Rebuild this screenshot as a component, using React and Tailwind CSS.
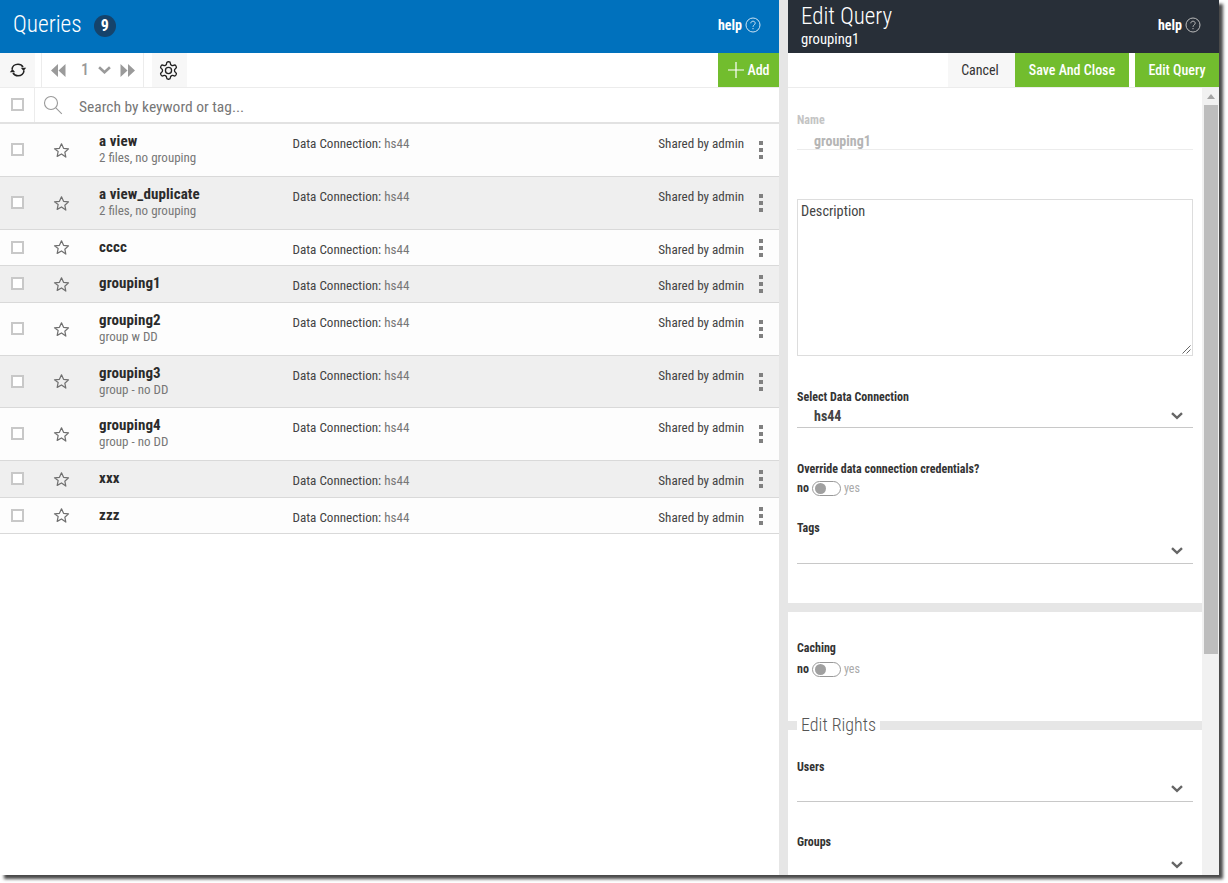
const rows = [
  { name: "a view", sub: "2 files, no grouping", h: "h-[53px]" },
  { name: "a view_duplicate", sub: "2 files, no grouping", h: "h-[53px]", alt: true },
  { name: "cccc", h: "h-[36px]" },
  { name: "grouping1", h: "h-[37px]", alt: true },
  { name: "grouping2", sub: "group w DD", h: "h-[53px]" },
  { name: "grouping3", sub: "group - no DD", h: "h-[52px]", alt: true },
  { name: "grouping4", sub: "group - no DD", h: "h-[53px]" },
  { name: "xxx", h: "h-[37px]", alt: true },
  { name: "zzz", h: "h-[36px]" },
];

function Help({ color }) {
  return (
    <div className="flex items-center gap-[3px] text-white">
      <span className="text-[14px] font-bold leading-none">help</span>
      <svg width="16" height="16" viewBox="0 0 16 16" fill="none" stroke={color} strokeWidth="1">
        <circle cx="8" cy="8" r="7" />
        <path d="M5.8 6.3c0-1.3 1-2.1 2.2-2.1s2.2.8 2.2 2c0 1.8-2.2 1.800-2.200 3.600M8 11v1.200" />
      </svg>
    </div>
  );
}

function Checkbox() {
  return <div className="h-[13px] w-[13px] border-2 border-[#c8c8c8] bg-white" />;
}

function Star() {
  return (
    <svg width="17" height="17" viewBox="0 0 24 24" fill="none" stroke="#6f6f6f" strokeWidth="1.7" strokeLinejoin="round">
      <path d="M12 2.500l2.900 6.400 7 .8-5.200 4.700 1.400 6.900L12 16.900l-6.100 3.400 1.400-6.900L2.100 9.700l7-.8z" />
    </svg>
  );
}

function Kebab() {
  return (
    <div className="flex flex-col gap-[3px]">
      <div className="h-[4px] w-[4px] bg-[#808080]" />
      <div className="h-[4px] w-[4px] bg-[#808080]" />
      <div className="h-[4px] w-[4px] bg-[#808080]" />
    </div>
  );
}

function Chevron({ color = "#666", w = 12 }) {
  return (
    <svg width={w} height={w * 0.67} viewBox="0 0 12 8" fill="none" stroke={color} strokeWidth="2.4">
      <path d="M1 1.200l5 4.600 5-4.600" />
    </svg>
  );
}

function Row({ name, sub, h, alt }) {
  return (
    <div className={`${h} flex border-b border-[#d9d9d9] ${alt ? "bg-[#efefef]" : "bg-[#fdfdfd]"}`}>
      <div className="flex w-[99px] shrink-0 items-center">
        <div className="ml-[11px] pb-[1px]"><Checkbox /></div>
        <div className="ml-[29px]"><Star /></div>
      </div>
      <div className="w-[193.500px] shrink-0 pt-[9px]">
        <div className="text-[15px] font-bold leading-[16px] tracking-[0.1px] text-[#2b2b2b]">{name}</div>
        {sub && <div className="text-[13px] leading-[17px] text-[#777]">{sub}</div>}
      </div>
      <div className="flex-1 pt-[13px] text-[13.100px] leading-[14px] text-[#444]">
        Data Connection: <span className="text-[#777]">hs44</span>
      </div>
      <div className="pt-[13px] text-[13.100px] leading-[14px] text-[#444]">Shared by admin</div>
      <div className="flex w-[35px] shrink-0 items-center justify-center pr-[1px]"><Kebab /></div>
    </div>
  );
}

function Label({ children }) {
  return <div className="text-[12px] font-bold leading-[14px] text-[#333]">{children}</div>;
}

function SelectLine({ value, h = "h-[23px]", pad = "" }) {
  return (
    <div className={`${h} ${pad} flex items-center justify-between border-b border-[#c8c8c8] pr-[10px]`}>
      <span className="pl-[17px] text-[14px] font-bold text-[#444]">{value}</span>
      <Chevron />
    </div>
  );
}

function Toggle() {
  return (
    <div className="flex items-center text-[12px] leading-[16px]">
      <span className="font-bold text-[#333]">no</span>
      <div className="ml-[3px] flex h-[15px] w-[29px] items-center rounded-full border border-[#999] bg-white pl-[2px]">
        <div className="h-[11px] w-[11px] rounded-full bg-[#a0a0a0]" />
      </div>
      <span className="ml-[3px] text-[#aaa]">yes</span>
    </div>
  );
}

export default function App() {
  return (
    <div className="h-[883px] w-[1228px] overflow-hidden bg-white font-['Roboto',sans-serif] [font-stretch:75%]">
      <div className="flex h-[875px] w-[1219px] shadow-[4px_4px_3px_#4a4a4a]">
        <div className="flex w-[779px] shrink-0 flex-col bg-white">
          <div className="flex h-[53px] shrink-0 items-center justify-between bg-[#0071bd] pb-[3px] pl-[13px] pr-[18px]">
            <div className="flex items-center">
              <span className="text-[23.300px] font-light leading-none text-white">Queries</span>
              <div className="ml-[12px] mt-[2px] flex h-[22px] w-[22px] items-center justify-center rounded-full bg-[#15436b] text-[16px] font-bold text-white">9</div>
            </div>
            <Help color="#cfe3f3" />
          </div>
          <div className="flex h-[35px] shrink-0 items-stretch border-b border-[#ececec]">
            <div className="flex w-[35px] items-center justify-center bg-[#f7f7f7]">
              <svg width="18" height="16" viewBox="0 0 18 16" fill="none" stroke="#222" strokeWidth="1.600">
                <path d="M3 7.500C3.200 4.300 5.800 2.300 9 2.300c2.300 0 4 1 5 2.700M15 8.500c-.2 3.200-2.800 5.200-6 5.200-2.300 0-4-1-5-2.700" />
                <path d="M11.800 5.800h5.400l-2.700 3.200zM.8 10.200h5.400L3.500 7z" fill="#222" stroke="none" />
              </svg>
            </div>
            <div className="ml-[6px] flex w-[103px] items-center border-x border-[#ececec] pl-[9px]">
              <svg width="15" height="13" viewBox="0 0 15 13" fill="#9a9a9a"><path d="M7 0v13L0 6.500zM14.500 0v13L7.500 6.500z" /></svg>
              <span className="ml-[15px] w-[8px] text-[16px] font-medium text-[#999]">1</span>
              <div className="ml-[9px]"><Chevron color="#9a9a9a" w={13} /></div>
              <svg className="ml-[9px]" width="15" height="13" viewBox="0 0 15 13" fill="#9a9a9a"><path d="M0.500 0v13l7-6.500zM8 0v13l7-6.500z" /></svg>
            </div>
            <div className="ml-[8px] flex w-[35px] items-center justify-center bg-[#f7f7f7] pr-[2px]">
              <svg width="21" height="21" viewBox="0 0 24 24" fill="none" stroke="#222" strokeWidth="1.500" strokeLinejoin="round">
                <path d="M12.220 2h-.440a2 2 0 0 0-2 2v.180a2 2 0 0 1-1 1.730l-.430.250a2 2 0 0 1-2 0l-.150-.080a2 2 0 0 0-2.730.730l-.220.380a2 2 0 0 0 .730 2.730l.150.100a2 2 0 0 1 1 1.720v.510a2 2 0 0 1-1 1.740l-.150.090a2 2 0 0 0-.730 2.730l.220.380a2 2 0 0 0 2.730.730l.150-.080a2 2 0 0 1 2 0l.430.250a2 2 0 0 1 1 1.730V20a2 2 0 0 0 2 2h.440a2 2 0 0 0 2-2v-.180a2 2 0 0 1 1-1.730l.430-.250a2 2 0 0 1 2 0l.150.080a2 2 0 0 0 2.730-.730l.220-.390a2 2 0 0 0-.730-2.730l-.150-.080a2 2 0 0 1-1-1.740v-.500a2 2 0 0 1 1-1.740l.150-.090a2 2 0 0 0 .730-2.730l-.220-.380a2 2 0 0 0-2.730-.730l-.150.080a2 2 0 0 1-2 0l-.430-.250a2 2 0 0 1-1-1.730V4a2 2 0 0 0-2-2z" />
                <circle cx="12" cy="12" r="3.500" />
              </svg>
            </div>
            <div className="flex-1" />
            <div className="flex w-[61px] items-center justify-center gap-[2px] bg-[#72bd2e] text-[14px] font-medium text-white">
              <svg width="18" height="18" viewBox="0 0 18 18" stroke="white" strokeWidth="1.200"><path d="M9 1v16M1 9h16" /></svg>
              Add
            </div>
          </div>
          <div className="flex h-[36px] shrink-0 items-center border-b-2 border-[#e2e2e2]">
            <div className="flex h-full w-[35px] items-center justify-center border-r border-[#ececec] pb-[2px]"><Checkbox /></div>
            <svg className="ml-[8px]" width="20" height="20" viewBox="0 0 20 20" fill="none" stroke="#999" strokeWidth="1.100">
              <circle cx="8" cy="8" r="6.500" /><path d="M12.800 12.800l6 6" />
            </svg>
            <span className="ml-[16px] mt-[5px] text-[15.500px] text-[#777]">Search by keyword or tag...</span>
          </div>
          {rows.map((r) => <Row key={r.name} {...r} />)}
        </div>

        <div className="w-[9px] shrink-0 bg-[#e6e6e6]" />

        <div className="flex min-w-0 flex-1 flex-col">
          <div className="flex h-[53px] shrink-0 items-center justify-between bg-[#282f38] pb-[3px] pl-[13px] pr-[18px] text-white">
            <div>
              <div className="text-[23px] font-light leading-[28px]">Edit Query</div>
              <div className="text-[14.700px] leading-[17px]">grouping1</div>
            </div>
            <Help color="#bbb" />
          </div>
          <div className="flex h-[35px] shrink-0 justify-end border-b border-[#ececec] text-[14px]">
            <div className="flex w-[67px] items-center justify-center bg-[#f7f7f7] pr-[3px] text-[#333]">Cancel</div>
            <div className="flex w-[114px] items-center justify-center bg-[#72bd2e] font-medium text-white">Save And Close</div>
            <div className="ml-[6px] flex w-[84px] items-center justify-center bg-[#72bd2e] font-medium text-white">Edit Query</div>
          </div>
          <div className="flex min-h-0 flex-1">
            <div className="min-w-0 flex-1 overflow-hidden bg-white">
              <div className="px-[9px]">
                <div className="pt-[25px] text-[12px] font-bold leading-[14px] text-[#c4c4c4]">Name</div>
                <div className="mt-[4px] h-[19px] border-b border-[#ececec] pl-[17px] text-[14px] font-bold leading-[21px] text-[#b5b5b5]">grouping1</div>
                <div className="mt-[49px] flex h-[157px] flex-col border border-[#ddd] px-[3px] pb-[1px] pt-[2px] text-[14.300px] leading-[18px] text-[#444]">
                  <span>Description</span>
                  <svg className="-mr-[2px] mt-auto self-end" width="9" height="9" viewBox="0 0 9 9" stroke="#666" strokeWidth="1">
                    <path d="M8.500 .5l-8 8M8.500 4.500l-4 4" />
                  </svg>
                </div>
                <div className="mt-[34px]"><Label>Select Data Connection</Label></div>
                <div className="mt-[1px]"><SelectLine value="hs44" /></div>
                <div className="mt-[34px]"><Label>Override data connection credentials?</Label></div>
                <div className="mt-[4px]"><Toggle /></div>
                <div className="mt-[25px]"><Label>Tags</Label></div>
                <SelectLine h="h-[29px]" pad="pt-[4px]" />
              </div>
              <div className="mt-[39px] h-[9px] bg-[#e6e6e6]" />
              <div className="px-[9px]">
                <div className="mt-[29px]"><Label>Caching</Label></div>
                <div className="mt-[6px]"><Toggle /></div>
              </div>
              <div className="mt-[36px] flex h-[24px] items-center">
                <div className="h-[9px] w-[9px] bg-[#e6e6e6]" />
                <span className="px-[4px] text-[18px] font-light leading-none text-[#555]">Edit Rights</span>
                <div className="h-[9px] flex-1 bg-[#e6e6e6]" />
              </div>
              <div className="px-[9px]">
                <div className="mt-[23px]"><Label>Users</Label></div>
                <SelectLine h="h-[28px]" pad="pt-[4px]" />
                <div className="mt-[33px]"><Label>Groups</Label></div>
                <SelectLine h="h-[30px]" pad="pt-[4px]" />
              </div>
            </div>
            <div className="flex w-[17px] shrink-0 flex-col items-center bg-[#f1f1f1]">
              <div className="mt-[6px] h-0 w-0 border-x-[4px] border-b-[5px] border-x-transparent border-b-[#a3a3a3]" />
              <div className="mt-[6px] h-[549px] w-[14px] bg-[#bdbdbd]" />
            </div>
          </div>
        </div>
      </div>
    </div>
  );
}
